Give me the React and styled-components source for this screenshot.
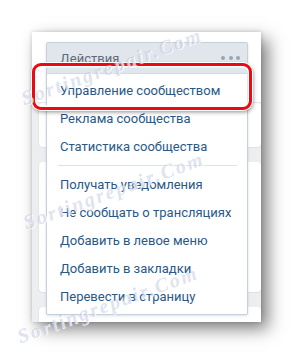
import styled, { createGlobalStyle } from "styled-components";

const GlobalStyle = createGlobalStyle`
  html, body {
    margin: 0;
    padding: 0;
    background: #fff;
  }
  body {
    font-family: Roboto, "Noto Sans", Arial, sans-serif;
  }
`;

const Page = styled.div`
  width: 293px;
  height: 354px;
  padding: 32px 0 0 32px;
  box-sizing: border-box;
  overflow: hidden;
  position: relative;
`;

const Shot = styled.div`
  position: relative;
  width: 229px;
  height: 290px;
  background: #edeef0;
  display: flex;
  flex-direction: column;
  box-shadow: 7px 7px 16px rgba(0, 0, 0, 0.5), 0 0 4px rgba(0, 0, 0, 0.18);
`;

const TopArea = styled.div`
  height: 70px;
  background: #fff;
  border-bottom: 1px solid #e3e5e8;
`;

const Cards = styled.div`
  flex: 1;
  display: flex;
  flex-direction: column;
  gap: 15px;
  padding-left: 7px;
  overflow: hidden;
`;

const Card = styled.div`
  height: ${(p) => p.h}px;
  flex-shrink: 0;
  background: #fff;
  border-radius: 4px;
  box-shadow: 0 1px 0 0 #dfe1e5, -1px 0 0 0 #e3e5e8;
`;

const Menu = styled.div`
  position: absolute;
  left: 14px;
  top: 10px;
  width: 202px;
  background: #fff;
  border: 1px solid #c5d0db;
  border-radius: 2px;
  box-shadow: 0 1px 3px rgba(0, 0, 0, 0.12);
  box-sizing: border-box;
  padding-bottom: 4px;
`;

const Header = styled.div`
  height: 30px;
  display: flex;
  align-items: center;
  justify-content: space-between;
  padding: 0 7px 0 13px;
  background: #e1e6ec;
  border-bottom: 1px solid #d3dae2;
  color: #5d6b7c;
  font-size: 13px;
  margin-bottom: 2px;
`;

const Dots = styled.div`
  display: flex;
  gap: 3.5px;
  span {
    width: 4px;
    height: 4px;
    border-radius: 50%;
    background: #9aa5b1;
  }
`;

const Item = styled.div`
  height: 28px;
  display: flex;
  align-items: center;
  padding-left: 13px;
  color: #2a5885;
  font-size: 13px;
  white-space: nowrap;
`;

const Separator = styled.div`
  height: 1px;
  background: #dce1e6;
  margin: 5px 10px 4px 11px;
`;

const Highlight = styled.div`
  position: absolute;
  left: 0;
  top: 31px;
  width: 220px;
  height: 47px;
  box-sizing: border-box;
  border: 3.5px solid #ea0a12;
  border-radius: 9px;
  box-shadow: inset 0 0 0 1.5px #fff, 0 0 0 1px #fff, 1px 2px 4px rgba(0, 0, 0, 0.45);
`;

const Watermark = styled.div`
  position: absolute;
  left: ${(p) => p.x}px;
  top: ${(p) => p.y}px;
  transform: rotate(-20deg);
  transform-origin: left center;
  font-family: "Liberation Serif", serif;
  font-style: italic;
  font-weight: bold;
  font-size: 20px;
  letter-spacing: 2.2px;
  color: rgba(170, 184, 214, 0.4);
  text-shadow: 1px 1px 0 rgba(255, 255, 255, 0.8);
  white-space: nowrap;
  pointer-events: none;
`;

const itemsTop = ["Управление сообществом", "Реклама сообщества", "Статистика сообщества"];
const itemsBottom = [
  "Получать уведомления",
  "Не сообщать о трансляциях",
  "Добавить в левое меню",
  "Добавить в закладки",
  "Перевести в страницу",
];

export default function App() {
  return (
    <>
      <GlobalStyle />
      <Page>
        <Shot>
          <TopArea />
          <Cards>
            <Card h={44} />
            <Card h={130} />
            <Card h={30} />
          </Cards>
          <Menu>
            <Header>
              Действия
              <Dots>
                <span />
                <span />
                <span />
              </Dots>
            </Header>
            {itemsTop.map((t) => (
              <Item key={t}>{t}</Item>
            ))}
            <Separator />
            {itemsBottom.map((t) => (
              <Item key={t}>{t}</Item>
            ))}
          </Menu>
          <Highlight />
        </Shot>
        <Watermark x={22} y={88}>Sortingrepair.Com</Watermark>
        <Watermark x={24} y={212}>Sortingrepair.Com</Watermark>
        <Watermark x={18} y={326}>Sortingrepair.Com</Watermark>
      </Page>
    </>
  );
}
